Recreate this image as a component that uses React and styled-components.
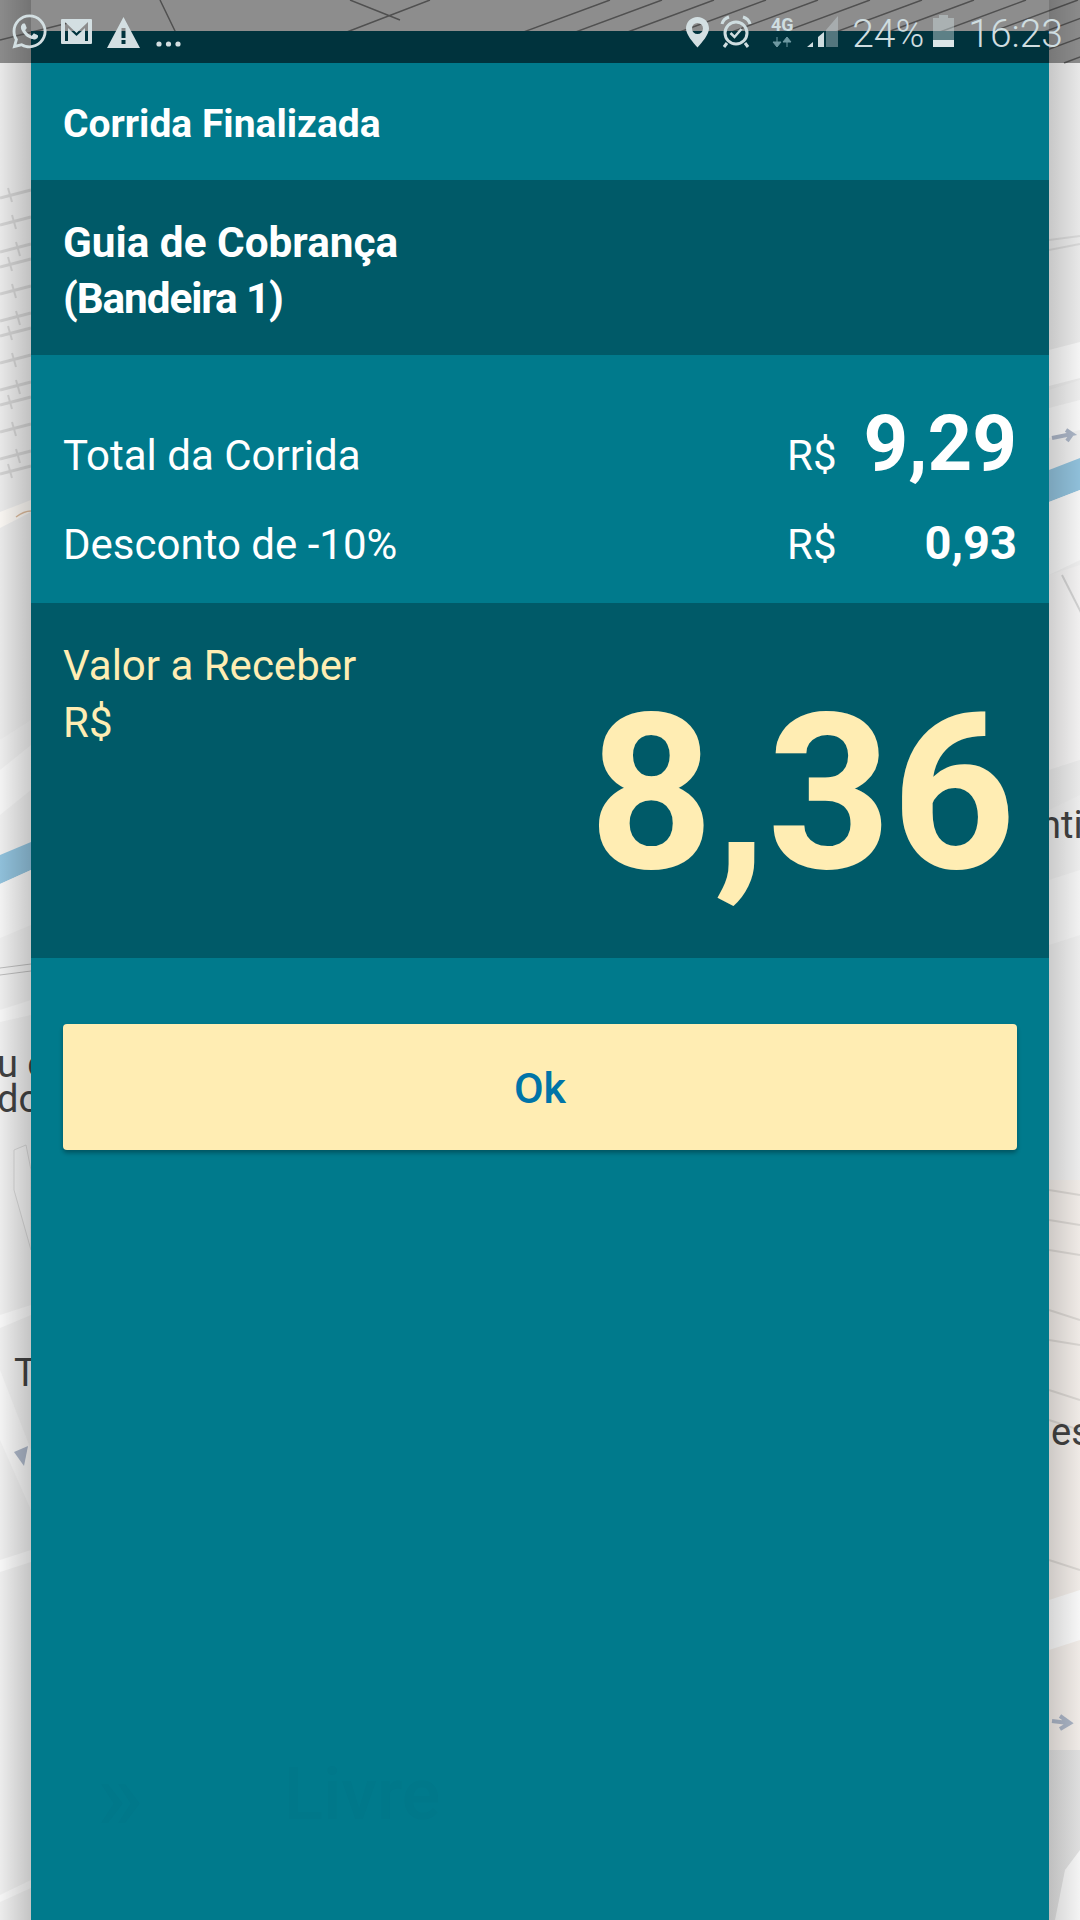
import React from 'react';
import styled, { createGlobalStyle } from 'styled-components';
import { FaWhatsapp } from 'react-icons/fa';

const Global = createGlobalStyle`
  html, body { margin: 0; padding: 0; background: #e6e6e6; }
  body { font-family: Roboto, "Noto Sans", sans-serif; overflow: hidden; }
`;

const Screen = styled.div`
  position: relative;
  width: 1080px;
  height: 1920px;
  overflow: hidden;
  background: #e6e6e6;
`;

const MapLayer = styled.svg`
  position: absolute;
  inset: 0;
`;

const StatusBar = styled.div`
  position: absolute;
  z-index: 3;
  top: 0;
  left: 0;
  right: 0;
  height: 63px;
  background: rgba(0, 0, 0, 0.4);
`;

const StatusIcons = styled.svg`
  position: absolute;
  inset: 0;
`;

const StatusLeft = styled.div`
  position: absolute;
  left: 10px;
  top: 12px;
  color: #d3dfe2;
  font-size: 39px;
  line-height: 0;
`;

const StatusRight = styled.div`
  position: absolute;
  top: 12px;
  right: 17px;
  display: flex;
  gap: 44px;
  color: #cfdde0;
  font-size: 39px;
  font-weight: 300;
  line-height: 44px;
`;

const Modal = styled.main`
  position: relative;
  z-index: 1;
  margin: 31px 31px 0;
  height: 1889px;
  background: #007a8c;
  color: #fff;
  display: flex;
  flex-direction: column;
`;

const TopBand = styled.div`
  height: 32px;
  background: #005666;
`;

const TitleBar = styled.header`
  height: 117px;
  padding: 4px 32px 0;
  box-sizing: border-box;
  display: flex;
  align-items: center;
  font-size: 39px;
  font-weight: 700;
`;

const GuideBlock = styled.section`
  height: 175px;
  padding: 6px 32px 0;
  box-sizing: border-box;
  background: #005a68;
  display: flex;
  flex-direction: column;
  justify-content: center;
  font-size: 42.3px;
  font-weight: 700;
  line-height: 56px;
`;

const GuideLine = styled.span`
  letter-spacing: ${p => p.$tight ? '-1.1px' : '0'};
`;

const Totals = styled.section`
  height: 248px;
  padding: 54px 32px 0;
  box-sizing: border-box;
  display: flex;
  flex-direction: column;
  gap: 26px;
`;

const TotalRow = styled.div`
  display: grid;
  grid-template-columns: 1fr 49px 181px;
  align-items: baseline;
  font-size: 42px;
  line-height: ${p => p.$tall}px;
`;

const Amount = styled.span`
  text-align: right;
  font-weight: 700;
  font-size: ${p => p.$size}px;
`;

const ReceiveBlock = styled.section`
  position: relative;
  height: 355px;
  padding: 34px 32px 0;
  box-sizing: border-box;
  background: #005a68;
  color: #ffedb3;
  display: flex;
  justify-content: space-between;
`;

const ReceiveLabel = styled.div`
  font-size: 42px;
  line-height: 57px;
`;

const BigAmount = styled.div`
  position: absolute;
  right: 33px;
  top: 64px;
  font-size: 217px;
  font-weight: 700;
  line-height: 254px;
`;

const Actions = styled.div`
  padding: 66px 32px 0;
`;

const OkButton = styled.button`
  display: block;
  width: 100%;
  height: 126px;
  padding: 2px 0 0;
  border: 0;
  border-radius: 4px;
  background: #ffedb3;
  color: #0074a8;
  font-family: inherit;
  font-size: 43px;
  font-weight: 500;
  box-shadow: 0 3px 4px rgba(0, 0, 0, 0.3);
`;

const Ghost = styled.div`
  position: absolute;
  left: ${p => p.$x}px;
  top: ${p => p.$y}px;
  font-size: ${p => p.$size}px;
  font-weight: ${p => p.$weight || 400};
  line-height: 1;
  color: rgba(0, 60, 75, 0.025);
  pointer-events: none;
  white-space: nowrap;
`;

function MapBackground() {
  const hatch = [];
  for (let i = 0; i < 13; i++) {
    const y = 190 + i * 23 + (i % 3) * 4;
    hatch.push(<path key={i} d={`M0 ${y + 8} L31 ${y}`} stroke="#cfcfcf" strokeWidth="3" fill="none" />);
    hatch.push(<path key={`t${i}`} d={`M${8 + (i % 3) * 4} ${y - 2} l4 14`} stroke="#cfcfcf" strokeWidth="2" fill="none" />);
  }
  const topLines = [];
  for (let i = 0; i < 14; i++) {
    const x = 440 + i * 52;
    topLines.push(<path key={i} d={`M${x} 63 L${x + 170} 0`} stroke="#858585" strokeWidth="1.5" fill="none" />);
  }
  return (
    <MapLayer width="1080" height="1920" viewBox="0 0 1080 1920">
      <defs>
        <linearGradient id="sl" x1="0" x2="1" y1="0" y2="0">
          <stop offset="0" stopColor="#000" stopOpacity="0" />
          <stop offset="1" stopColor="#000" stopOpacity="0.17" />
        </linearGradient>
        <linearGradient id="sr" x1="0" x2="1" y1="0" y2="0">
          <stop offset="0" stopColor="#000" stopOpacity="0.14" />
          <stop offset="1" stopColor="#000" stopOpacity="0" />
        </linearGradient>
      </defs>
      <rect width="1080" height="1920" fill="#ececec" />
      <path d="M1049 0H1080V380L1049 390ZM0 0H31V720L0 740Z" fill="#e8e8e8" />
      {hatch}
      {topLines}
      <path d="M1049 240 L1080 236 M1049 250 L1080 244" stroke="#d6d6d6" strokeWidth="2" />
      <path d="M0 512 L31 500 V512 L0 528Z" fill="#f7f4f0" />
      <path d="M16 517 q8 -6 15 -6" stroke="#d9b89a" strokeWidth="1.5" fill="none" />
      <path d="M0 770 L31 745 V790 L0 815Z" fill="#f3f3f3" />
      <path d="M0 855 L31 842 V870 L0 884Z" fill="#8fbfd9" />
      <path d="M0 884 L31 870 V925 L0 938Z" fill="#f2f2f2" />
      <path d="M0 968 L31 964 M0 975 L31 971" stroke="#b9b9b9" strokeWidth="1" />
      <path d="M0 1010 L31 1000 V1015 L0 1022Z" fill="#f4f4f4" />
      <path d="M14 1150 L26 1145 L31 1170 V1250 L14 1190Z" fill="#efefef" stroke="#d3d3d3" />
      <path d="M0 1315 L31 1305 V1315 L0 1328Z" fill="#f5f5f5" />
      <path d="M0 1370 L31 1450 V1510 L0 1440Z" fill="#f3f3f3" />
      <path d="M0 1560 L31 1550 V1562 L0 1572Z" fill="#f6f6f6" />
      <path d="M14 1452 L28 1446 L24 1466 Z" fill="#a9b3c4" />
      <path d="M0 1895 L31 1880 V1888 L0 1902Z" fill="#f5f5f5" />

      <path d="M1049 350 L1080 342 V378 L1049 386Z" fill="#f5f5f5" />
      <path d="M1049 408 L1080 400 V430 L1049 438Z" fill="#f5f5f5" />
      <path d="M1049 470 L1080 458 V490 L1049 502Z" fill="#8fbfd9" />
      <path d="M1049 502 L1080 490 V560 L1049 575Z" fill="#f4f4f4" />
      <path d="M1049 575 L1080 565 V760 L1049 770Z" fill="#f1f0f0" />
      <path d="M1095 640 L1062 575" stroke="#cfcfcf" strokeWidth="2" />
      <path d="M1052 438 L1072 434 L1066 430 M1072 434 L1067 441" stroke="#a9b3c4" strokeWidth="4" fill="none" />
      <path d="M1049 770 L1080 760 V795 L1049 810Z" fill="#e9e9e9" />
      <path d="M1049 880 L1080 870 V935 L1049 945Z" fill="#f2f2f2" />
      <path d="M1049 1180 H1080 V1800 H1049Z" fill="#efeae6" />
      <path d="M1049 1190 L1080 1195 M1049 1220 L1080 1225 M1049 1250 L1080 1255 M1049 1310 L1080 1320 M1049 1340 L1080 1345 M1049 1390 L1080 1400 M1049 1420 L1080 1430 M1049 1560 L1080 1570 M1049 1610 L1080 1620" stroke="#d8d4d0" strokeWidth="2" />
      <path d="M1049 1600 L1080 1590 V1640 L1049 1650Z" fill="#f7f7f7" />
      <path d="M1052 1721 L1068 1723 M1060 1716 L1070 1723 L1060 1729" stroke="#a9b3c4" strokeWidth="4" fill="none" />
      <path d="M1049 1750 H1080 V1920 H1049Z" fill="#dedede" />
      <path d="M1065 1870 L1080 1850 V1920 H1055Z" fill="#f4f4f4" />

      <text x="-3" y="1077" fontFamily="Roboto, sans-serif" fontSize="38" fill="#404040">u c</text>
      <text x="-3" y="1112" fontFamily="Roboto, sans-serif" fontSize="38" fill="#404040">do</text>
      <text x="14" y="1386" fontFamily="Roboto, sans-serif" fontSize="38" fill="#404040">T</text>
      <text x="1040" y="838" fontFamily="Roboto, sans-serif" fontSize="38" fill="#404040">nti</text>
      <text x="1051" y="1445" fontFamily="Roboto, sans-serif" fontSize="38" fill="#404040">es</text>

      <rect x="0" y="0" width="31" height="1920" fill="url(#sl)" />
      <rect x="1049" y="0" width="31" height="1920" fill="url(#sr)" />
      <path d="M0 40 L80 20 M300 50 L430 0 M160 0 L190 62 M350 0 L400 20" stroke="#858585" strokeWidth="1.5" fill="none" />
    </MapLayer>
  );
}

function StatusGlyphs() {
  return (
    <StatusIcons width="1080" height="63" viewBox="0 0 1080 63">
      <g fill="#d3dfe2">
        <path fillRule="evenodd" d="M62 19h29a1 1 0 0 1 1 1v23a1 1 0 0 1-1 1H62a1 1 0 0 1-1-1V20a1 1 0 0 1 1-1Zm3 3 11.500 11L88 22v19h-3V28l-8.500 8-8.500-8v13h-3Z" />
        <path fillRule="evenodd" d="M123.500 17 140 48H107Zm-2 11v10h4V28Zm0 12v4h4v-4Z" />
        <circle cx="159" cy="44" r="2.600" />
        <circle cx="168.500" cy="44" r="2.600" />
        <circle cx="178" cy="44" r="2.600" />
        <path fillRule="evenodd" d="M697.500 17c6.500 0 11.500 5 11.500 11.500 0 6-7 14-11.500 19-4.500-5-11.500-13-11.500-19 0-6.500 5-11.500 11.500-11.500Zm0 6a5.500 5.500 0 1 0 0 11 5.500 5.500 0 0 0 0-11Z" />
      </g>
      <g fill="none" stroke="#cfdde0" strokeWidth="3">
        <circle cx="736" cy="33" r="11" />
        <path d="M722 24c1-4 4-6 7-7M750 24c-1-4-4-6-7-7M727 43l-3 4M745 43l3 4" />
        <path d="M730.500 33l4 4 7-8" strokeWidth="2.500" />
      </g>
      <text x="771" y="31" fontFamily="Roboto, sans-serif" fontWeight="700" fontSize="18" fill="#cfdde0">4G</text>
      <path d="M777 37v6M773 42h8l-4 5ZM787 47v-6M783 42h8l-4-5Z" fill="#6f9aa3" stroke="#6f9aa3" strokeWidth="1" />
      <path d="M807 47l6-5v5Z M818 47V37l6-5v15Z" fill="#cfdde0" />
      <path d="M826 47V30l12-14v31Z" fill="#cfdde0" fillOpacity="0.4" />
      <path d="M933 18h6v-3h9v3h6v29h-21Z" fill="#cfdde0" fillOpacity="0.45" />
      <path d="M933 40h21v7h-21Z" fill="#dbe6e8" />
    </StatusIcons>
  );
}

export default function App() {
  return (
    <Screen>
      <Global />
      <MapBackground />
      <Modal>
        <TopBand />
        <TitleBar>Corrida Finalizada</TitleBar>
        <GuideBlock>
          <GuideLine>Guia de Cobrança</GuideLine>
          <GuideLine $tight>(Bandeira 1)</GuideLine>
        </GuideBlock>
        <Totals>
          <TotalRow $tall={70}>
            <span>Total da Corrida</span>
            <span>R$</span>
            <Amount $size={78}>9,29</Amount>
          </TotalRow>
          <TotalRow $tall={52}>
            <span>Desconto de -10%</span>
            <span>R$</span>
            <Amount $size={47}>0,93</Amount>
          </TotalRow>
        </Totals>
        <ReceiveBlock>
          <ReceiveLabel>
            Valor a Receber
            <br />
            R$
          </ReceiveLabel>
          <BigAmount>8,36</BigAmount>
        </ReceiveBlock>
        <Actions>
          <OkButton>Ok</OkButton>
        </Actions>
        <Ghost $x={253} $y={1728} $size={72} $weight={500}>Livre</Ghost>
        <Ghost $x={65} $y={1716} $size={100}>»</Ghost>
        <Ghost $x={510} $y={80} $size={46}>RIO</Ghost>
      </Modal>
      <StatusBar>
        <StatusLeft>
          <FaWhatsapp />
        </StatusLeft>
        <StatusGlyphs />
        <StatusRight>
          <span>24%</span>
          <span>16:23</span>
        </StatusRight>
      </StatusBar>
    </Screen>
  );
}
